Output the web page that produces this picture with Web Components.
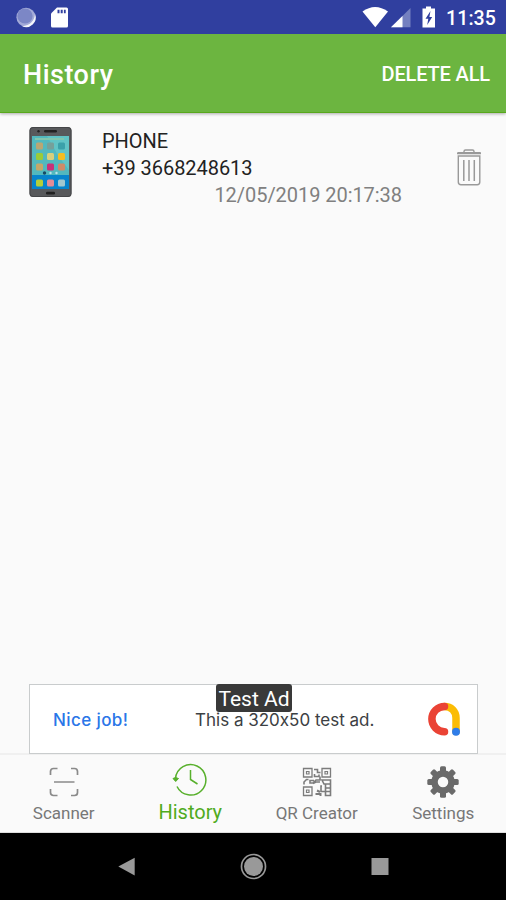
<!DOCTYPE html>
<html lang="en">
<head>
<meta charset="utf-8">
<title>History</title>
<style>
html,body{margin:0;height:100%;overflow:hidden}
body{font-family:Roboto,"Liberation Sans",sans-serif;background:#fafafa}
</style>
</head>
<body>
<phone-screen>
  <status-bar slot="top" time="11:35"></status-bar>
  <app-bar slot="top"><span>History</span><span slot="action">DELETE ALL</span></app-bar>
  <history-item>
    <span slot="kind">PHONE</span>
    <span slot="value">+39 3668248613</span>
    <span slot="date">12/05/2019 20:17:38</span>
  </history-item>
  <ad-banner slot="bottom">
    <span slot="lead">Nice job!</span>
    <span slot="badge">Test Ad</span>
    <span>This a 320x50 test ad.</span>
  </ad-banner>
  <tab-bar slot="bottom">
    <tab-item icon="scan">Scanner</tab-item>
    <tab-item icon="history" active>History</tab-item>
    <tab-item icon="qr">QR Creator</tab-item>
    <tab-item icon="gear">Settings</tab-item>
  </tab-bar>
  <system-nav slot="bottom"></system-nav>
</phone-screen>
<script>
const define = (name, html) => customElements.define(name, class extends HTMLElement {
  constructor() {
    super();
    const t = document.createElement('template');
    t.innerHTML = typeof html === 'function' ? html(this) : html;
    this.attachShadow({mode: 'open'}).append(t.content.cloneNode(true));
  }
});

define('phone-screen', `
<style>
:host{display:flex;flex-direction:column;width:506px;height:900px;background:#fafafa}
main{flex:1;min-height:0}
</style>
<slot name="top"></slot><main><slot></slot></main><slot name="bottom"></slot>`);

define('status-bar', el => `
<style>
:host{display:flex;height:34px;background:#303f9f;color:#fff;flex:none;position:relative;z-index:2}
svg{flex:none;display:block}
b{font-weight:500;font-size:19.500px;line-height:37px;letter-spacing:.1px;margin-left:auto;padding-right:10px}
</style>
<svg width="440" height="34" viewBox="0 0 440 34">
  <circle cx="26" cy="17.300" r="9.600" fill="#a4abd8"/>
  <path d="M35 14A9.600 9.600 0 0 1 22 26.200Q34 25 35 14Z" fill="#f4f5fb"/>
  <circle cx="25" cy="16" r="7.600" fill="#7c87c6"/>
  <path d="M57 7.500H66.500Q68 7.500 68 9V26Q68 27.500 66.500 27.500H52.500Q51 27.500 51 26V13.500Z" fill="#fff"/>
  <path d="M57.500 9.700h2v3.600h-2zM60.700 9.700h2v3.600h-2zM63.900 9.700h1.800v3.600h-1.800z" fill="#303f9f"/>
  <path d="M362.500 11.500Q375 2.500 388 11.500L375.300 27.300Z" fill="#fff"/>
  <path d="M391 27.300L410.500 8V27.300Z" fill="#7480c0"/>
  <path d="M391 27.300L402.500 16V27.300Z" fill="#fff"/>
  <path d="M426 6.500h5v2h4V27.500h-12.500V8.500h3.500Z" fill="#fff"/>
  <path d="M430.500 11L425.500 18.800h2.800L427.200 25L432.200 17h-2.800Z" fill="#303f9f"/>
</svg>
<b>${el.getAttribute('time')}</b>`);

define('app-bar', `
<style>
:host{display:flex;align-items:center;justify-content:space-between;box-sizing:border-box;height:79px;flex:none;padding:4px 16px 0 23px;background:#6cb540;color:#fff;border-bottom:1.500px solid #58a81c;box-shadow:0 1px 3px rgba(0,0,0,.32);position:relative;z-index:1;font-weight:500}
.t{font-size:27px;letter-spacing:.5px}.a{font-size:20px;letter-spacing:-.15px;margin-top:-2px}
</style>
<span class="t"><slot></slot></span><span class="a"><slot name="action"></slot></span>`);

define('history-item', `
<style>
:host{display:grid;grid-template-columns:73px 300px 26px;justify-content:start;padding:14px 24px 0 29px;font-size:20px;color:#222}
.text{line-height:27px;padding-top:1px;letter-spacing:-.05px}
.date{text-align:right;color:#808080}
svg{display:block}
.bin{margin:21px 0 0 54px}
</style>
<svg width="43" height="71" viewBox="0 0 43 71">
  <rect x=".5" y="0" width="42" height="70" rx="3.500" fill="#58595b"/>
  <rect x="1" y=".5" width="41" height="69" rx="3" fill="none" stroke="#454648" stroke-width="1"/>
  <rect x="3" y="9" width="37" height="53" fill="#52b8be"/>
  <path d="M18 9H40V43L30 30Z" fill="#61c4c6"/>
  <rect x="3" y="48" width="37" height="14" fill="#0784cc"/>
  <path d="M6 12H35" stroke="#82c6ae" stroke-width="2"/>
  <rect x="15" y="3" width="13" height="2.500" rx="1.200" fill="#222"/><circle cx="9.500" cy="4.300" r="1.200" fill="#222"/>
  <rect x="17" y="64.800" width="9" height="2.600" rx="1.200" fill="#202020"/>
  <g>
    <rect x="7" y="15.500" width="7" height="7" rx="1.500" fill="#b9a674"/><rect x="18" y="15.500" width="7" height="7" rx="1.500" fill="#76a09a"/><rect x="29" y="15.500" width="7" height="7" rx="1.500" fill="#3ba1aa"/>
    <rect x="7" y="26" width="7" height="7" rx="1.500" fill="#9bcb38"/><rect x="18" y="26" width="7" height="7" rx="1.500" fill="#d9cf7c"/><rect x="29" y="26" width="7" height="7" rx="1.500" fill="#f4bd20"/>
    <rect x="7" y="36.500" width="7" height="7" rx="1.500" fill="#c5a76a"/><rect x="18" y="36.500" width="7" height="7" rx="1.500" fill="#c92f78"/><rect x="29" y="36.500" width="7" height="7" rx="1.500" fill="#cf8b68"/>
    <rect x="7" y="52.500" width="7" height="7" rx="1.500" fill="#b5cf38"/><rect x="18" y="52.500" width="7" height="7" rx="1.500" fill="#e58c96"/><rect x="29" y="52.500" width="7" height="7" rx="1.500" fill="#a2c8cf"/>
  </g>
  <circle cx="15.500" cy="46" r="1.700" fill="#174a66"/><circle cx="21.500" cy="46" r="1.200" fill="#b9e4ec"/><circle cx="27.500" cy="46" r="1.200" fill="#b9e4ec"/>
</svg>
<div class="text">
  <div><slot name="kind"></slot></div>
  <div><slot name="value"></slot></div>
  <div class="date"><slot name="date"></slot></div>
</div>
<svg class="bin" width="26" height="40" viewBox="0 0 26 40" fill="none" stroke="#999" stroke-width="1.400">
  <path d="M1 5.500H25M2.200 6V4.700H24V6M8 4.500V3.500Q8 2 9.500 2H16.500Q18 2 18 3.500V4.500M2.300 8H23.800V34Q23.800 36.700 21.200 36.700H5Q2.300 36.700 2.300 34Z"/>
  <path d="M7.800 12V33M13 12V33M18.300 12V33" stroke-width="1.500"/>
</svg>`);

define('ad-banner', `
<style>
:host{display:grid;grid-template-columns:142px 1fr auto;align-items:center;box-sizing:border-box;width:449px;height:70px;margin:0 28px -1px 29px;padding:0 16px 0 23px;background:#fff;border:1px solid #c9cccd;flex:none;position:relative;z-index:1;font:17px/18px Inter,Roboto,sans-serif;font-feature-settings:"calt" 0;color:#3c4043}
.lead,.copy{margin-top:2px}
.lead{color:#2a76e8;font-weight:500;letter-spacing:.4px}
.badge{position:absolute;left:186px;top:-1px;width:76px;height:28px;border-radius:3px;background:#393939;color:#fff;font-family:Roboto,sans-serif;font-size:21px;line-height:30px;text-align:center;white-space:nowrap}
svg{display:block}
</style>
<span class="lead"><slot name="lead"></slot></span>
<span class="copy"><slot></slot></span>
<svg width="36" height="36" viewBox="0 0 36 36" fill="none" stroke-linecap="round" stroke-width="7.500">
  <path d="M19.500 5.500C26 5.500 31 10 31 17V30.500" stroke="#fbbc04"/>
  <path d="M19.500 5.500A12.600 12.600 0 1 0 19.500 30.700" stroke="#ea4335"/>
  <circle cx="31" cy="30.700" r="4" fill="#2f7de9"/>
</svg>
<span class="badge"><slot name="badge"></slot></span>`);

define('tab-bar', `
<style>
:host{display:grid;grid-template-columns:repeat(4,1fr);box-sizing:border-box;height:80px;flex:none;border-top:2px solid #f0f0f0;border-bottom:1px solid #ddd;background:#fafafa}
</style><slot></slot>`);

const finder = (x, y) => `<path d="M${x} ${y}h8.500v8.500h-8.500z" stroke-width="1.300"/><path d="M${x+3} ${y+3}h2.500v2.500h-2.500z" stroke-width="1.200"/>`;
const teeth = Array.from({length: 8}, (_, i) => `<rect x="15" y="2.300" width="6" height="8" rx="1.500" transform="rotate(${i*45} 18 18)"/>`).join('');
const icons = {
  scan: `<g fill="none" stroke="#8a8a8a" stroke-width="1.700"><path d="M4.500 11V7.500Q4.500 4.500 7.500 4.500H11.500M25 4.500H28.500Q31.500 4.500 31.500 7.500V11M31.500 25V28.500Q31.500 31.500 28.500 31.500H25M11.500 31.500H7.500Q4.500 31.500 4.500 28.500V25M8 18H28.500"/></g>`,
  history: `<g fill="none" stroke="#58b02c" stroke-width="1.500"><path d="M3.500 16.500A15.200 15.200 0 1 1 5 24.500M18.500 8V17.500L25.500 22"/></g><path d="M1 16.500L3.500 15.500L6.500 16.500L3.700 19.500Z" fill="#58b02c" stroke="#58b02c"/>`,
  qr: `<g fill="none" stroke="#7c7c7c">${finder(4.500,4.500)}${finder(23,4.500)}${finder(4.500,23)}
    <g stroke-width="1.600"><path d="M15 5.500h3.500v3h3M15.500 10v2.500h4.500v-2M21 12.500v3.500h-4l-3 3h-3v-2.500h4M5 20.500v-2.500l2.500-2.500h2M14 19.500l3-1.500h4M23 16h8.500v4H25zM23 22h-1v5.500h9.500v-5M26.500 19.500v12h5V27.500M31.500 20v4h-5"/></g>
    <path d="M18 26.500l3 1.500M16.500 30h5v2" stroke-width="2"/></g>`,
  gear: `<g fill="#6a6a6a">${teeth}</g><circle cx="18" cy="18" r="8.500" fill="none" stroke="#6a6a6a" stroke-width="6.500"/>`
};
define('tab-item', el => `
<style>
:host{display:flex;flex-direction:column;align-items:center;font-size:17px;color:#777;padding:9px 0 0 1px}
:host([active]){font-size:20px;color:#4fab20;padding-top:7px}
svg{display:block;flex:none}
span{line-height:24px;margin-top:1px;white-space:nowrap}
:host([active]) span{line-height:26px}
</style>
<svg width="36" height="36" viewBox="0 0 36 36">${icons[el.getAttribute('icon')]}</svg><span><slot></slot></span>`);

define('system-nav', `
<style>
:host{display:flex;justify-content:center;gap:98px;height:67px;flex:none;background:#000;padding-left:2px}
svg{display:block;margin-top:19px}
</style>
<svg width="28" height="28" viewBox="0 0 28 28"><path d="M4.300 14.500L20.700 5.700V23.500Z" fill="#999"/></svg>
<svg width="28" height="28" viewBox="0 0 28 28"><circle cx="13.500" cy="14.500" r="9.500" fill="#999"/><circle cx="13.500" cy="14.500" r="12" fill="none" stroke="#999" stroke-width="1.700"/></svg>
<svg width="28" height="28" viewBox="0 0 28 28"><rect x="5.500" y="6" width="17" height="17" fill="#999"/></svg>`);
</script>
</body>
</html>
